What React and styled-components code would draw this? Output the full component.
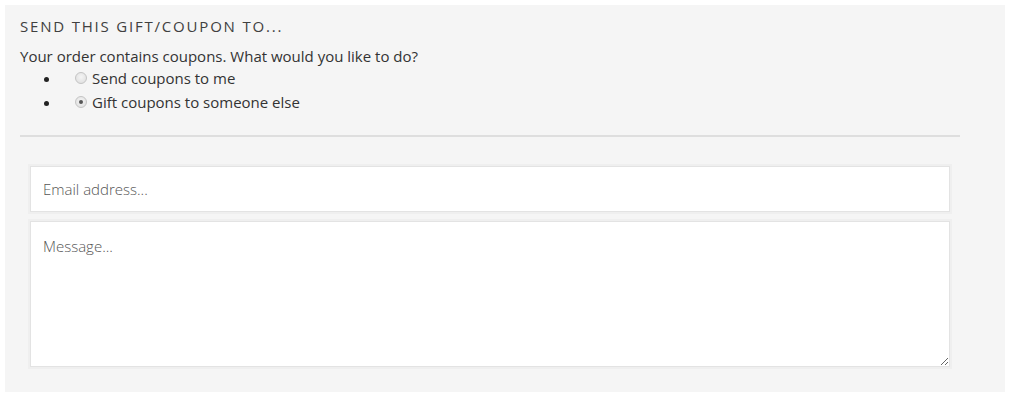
import React, { useState } from 'react';
import styled, { createGlobalStyle } from 'styled-components';

const GlobalStyle = createGlobalStyle`
  html, body {
    margin: 0;
    padding: 0;
    background: #ffffff;
  }
  body {
    font-family: 'Open Sans', 'Liberation Sans', sans-serif;
    color: #333333;
  }
`;

function App() {
  const [choice, setChoice] = useState('gift');
  return (
    <Page>
      <GlobalStyle />
      <Panel>
        <Heading>Send this gift/coupon to...</Heading>
        <Intro>Your order contains coupons. What would you like to do?</Intro>
        <Options>
          <Option>
            <Label>
              <Radio
                type="radio"
                name="coupon-target"
                checked={choice === 'me'}
                onChange={() => setChoice('me')}
              />
              Send coupons to me
            </Label>
          </Option>
          <Option>
            <Label>
              <Radio
                type="radio"
                name="coupon-target"
                checked={choice === 'gift'}
                onChange={() => setChoice('gift')}
              />
              Gift coupons to someone else
            </Label>
          </Option>
        </Options>
        <Divider />
        <Form>
          <EmailInput type="email" placeholder="Email address..." />
          <MessageInput placeholder="Message..." />
        </Form>
      </Panel>
    </Page>
  );
}

export default App;

const Page = styled.div`
  padding: 5px 13px 12px 5px;
`;

const Panel = styled.section`
  background: #f5f5f5;
  padding: 11px 45px 25px 15px;
`;

const Heading = styled.h3`
  margin: 0;
  font-family: 'Open Sans', 'Liberation Sans', sans-serif;
  font-weight: 400;
  font-size: 15px;
  line-height: 20px;
  letter-spacing: 1.8px;
  text-transform: uppercase;
  color: #404040;
`;

const Intro = styled.p`
  margin: 10px 0 0;
  font-size: 15px;
  line-height: 20px;
  color: #333333;
`;

const Options = styled.ul`
  margin: 0;
  padding: 0 0 0 24px;
  list-style: none;
`;

const Option = styled.li`
  display: flex;
  align-items: center;
  height: 24px;
  font-size: 15px;
  color: #333333;
  &::before {
    content: '';
    width: 5px;
    height: 5px;
    border-radius: 50%;
    background: #222222;
    margin: 2px 21px 0 0;
  }
`;

const Label = styled.label`
  display: flex;
  align-items: center;
  cursor: pointer;
`;

const Radio = styled.input`
  appearance: none;
  width: 12px;
  height: 12px;
  margin: 0 5px 0 5px;
  border-radius: 50%;
  border: 1px solid #c4c4c4;
  background: radial-gradient(circle at 50% 40%, #f4f4f4 0%, #dcdcdc 100%);
  box-sizing: border-box;
  position: relative;
  &:checked::after {
    content: '';
    position: absolute;
    left: 3px;
    top: 3px;
    width: 4px;
    height: 4px;
    border-radius: 50%;
    background: #555555;
  }
`;

const Divider = styled.hr`
  margin: 21px 0 0;
  border: none;
  border-top: 2px solid #dedede;
`;

const Form = styled.div`
  display: flex;
  flex-direction: column;
  gap: 9px;
  padding: 29px 10px 0;
`;

const fieldStyles = `
  box-sizing: border-box;
  width: 100%;
  background: #ffffff;
  border: 1px solid #e3e3e3;
  box-shadow: 0 0 0 2px #efefef;
  border-radius: 0;
  padding: 0 12px;
  font-family: 'Open Sans', 'Liberation Sans', sans-serif;
  font-weight: 300;
  font-size: 15px;
  color: #333333;
  outline: none;
  &::placeholder {
    color: #555555;
    opacity: 1;
  }
`;

const EmailInput = styled.input`
  ${fieldStyles}
  height: 46px;
`;

const MessageInput = styled.textarea`
  ${fieldStyles}
  height: 146px;
  padding-top: 14px;
  resize: vertical;
  display: block;
`;
